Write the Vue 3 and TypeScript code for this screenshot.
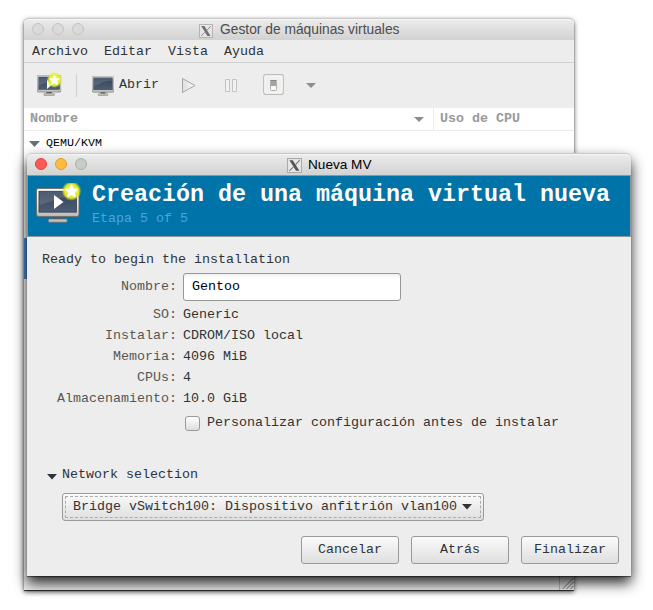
<script setup lang="ts">
interface Detail {
  label: string
  value: string
}

const menus: string[] = ['Archivo', 'Editar', 'Vista', 'Ayuda']

const details: Detail[] = [
  { label: 'SO:', value: 'Generic' },
  { label: 'Instalar:', value: 'CDROM/ISO local' },
  { label: 'Memoria:', value: '4096 MiB' },
  { label: 'CPUs:', value: '4' },
  { label: 'Almacenamiento:', value: '10.0 GiB' },
]

const actions: string[] = ['Cancelar', 'Atrás', 'Finalizar']
</script>

<template>
  <div class="desktop">
    <svg class="defs" width="0" height="0" aria-hidden="true">
      <defs>
        <linearGradient id="screenFill" x1="0" y1="0" x2="0" y2="1">
          <stop offset="0" stop-color="#35435a" />
          <stop offset="1" stop-color="#4c5d74" />
        </linearGradient>
        <linearGradient id="frameFill" x1="0" y1="0" x2="0" y2="1">
          <stop offset="0" stop-color="#ffffff" />
          <stop offset="0.75" stop-color="#dcdcda" />
          <stop offset="1" stop-color="#b4b4b2" />
        </linearGradient>
        <radialGradient id="starGlow">
          <stop offset="0" stop-color="#fff95a" />
          <stop offset="0.7" stop-color="#eaf01c" stop-opacity="0.95" />
          <stop offset="1" stop-color="#d8e830" stop-opacity="0" />
        </radialGradient>
        <linearGradient id="playFill" x1="0" y1="0" x2="1" y2="0">
          <stop offset="0" stop-color="#dededc" />
          <stop offset="1" stop-color="#fafafa" />
        </linearGradient>
        <symbol id="monitor" viewBox="0 0 44 35" preserveAspectRatio="none">
          <path d="M17 28h10v3h-10z" fill="#555753" />
          <rect x="12.5" y="31" width="19" height="3.2" rx="0.8" fill="#c4c4c2" stroke="#6c6e6b" stroke-width="0.8" />
          <rect x="0.5" y="0.5" width="43" height="28" rx="1.8" fill="url(#frameFill)" stroke="#70726f" />
          <rect x="3" y="3.2" width="38" height="21" fill="url(#screenFill)" stroke="#2c394b" stroke-width="0.7" />
          <path d="M3.5 3.7h37v4C27 8 17 13 3.5 17z" fill="#fff" opacity="0.13" />
        </symbol>
        <symbol id="star" viewBox="0 0 20 20">
          <circle cx="10" cy="10" r="10" fill="url(#starGlow)" />
          <path d="M10 3.600l1.900 4.100 4.500.6-3.300 3.100.8 4.500-3.900-2.200-3.900 2.200.8-4.500-3.300-3.100 4.500-.6z" fill="#fff" stroke="#fff" stroke-width="0.8" stroke-linejoin="round" />
        </symbol>
        <symbol id="xlogo" viewBox="0 0 14 14">
          <rect x="0.5" y="0.5" width="13" height="13" fill="#e9e9e9" stroke="#aaa" />
          <path d="M2.2 2h3.2l6.2 10H8.4z" fill="#555" />
          <path d="M11.8 2L7.9 6.4M6 8.2L2.2 12" stroke="#777" stroke-width="1" fill="none" />
        </symbol>
      </defs>
    </svg>

    <section class="window manager">
      <header class="titlebar inactive">
        <div class="lights"><i></i><i></i><i></i></div>
        <svg class="xicon" width="14" height="14"><use href="#xlogo" /></svg>
        <span class="caption">Gestor de máquinas virtuales</span>
      </header>
      <nav class="menubar">
        <span v-for="menu in menus" :key="menu">{{ menu }}</span>
      </nav>
      <div class="toolbar">
        <svg class="tool-new" width="27" height="25" viewBox="0 0 27 25">
          <use href="#monitor" x="0" y="3" width="24.3" height="21" />
          <path d="M10 8v9l5-4.5z" fill="#fff" />
          <use href="#star" x="9.500" y="0" width="16" height="16" />
        </svg>
        <span class="separator"></span>
        <svg class="tool-open" width="22" height="20"><use href="#monitor" width="22" height="20" /></svg>
        <span class="open-label">Abrir</span>
        <svg class="tool-play" width="15" height="17" viewBox="0 0 15 17">
          <path d="M1.5 1.5v14l12.5-7z" fill="url(#playFill)" stroke="#a5a6a4" stroke-linejoin="round" />
        </svg>
        <svg class="tool-pause" width="14" height="13" viewBox="0 0 14 13">
          <path d="M1.5.5h4v12h-4zM8.5.5h4v12h-4z" fill="#f1f1f0" stroke="#c3c4c2" />
        </svg>
        <svg class="tool-power" width="21" height="21" viewBox="0 0 21 21">
          <rect x="0.7" y="0.7" width="19.6" height="19.6" rx="2" fill="#efefee" stroke="#bcbdbb" stroke-width="1.2" />
          <rect x="2" y="2" width="17" height="17" rx="1" fill="none" stroke="#fafafa" />
          <rect x="7.5" y="6.5" width="6" height="10" rx="1" fill="#fafafa" stroke="#b0b1af" />
          <path d="M8 7h5v5H8z" fill="#a4a5a3" />
          <path d="M7.5 7V6.5h6" stroke="#868785" fill="none" />
        </svg>
        <svg class="tool-more" width="10" height="5" viewBox="0 0 10 5"><path d="M0 0h10L5 5z" fill="#8b8e8f" /></svg>
      </div>
      <div class="columns">
        <div class="column-name">
          <span>Nombre</span>
          <svg width="10" height="5" viewBox="0 0 10 5"><path d="M0 0h10L5 5z" fill="#8b8e8f" /></svg>
        </div>
        <div class="column-cpu">Uso de CPU</div>
      </div>
      <div class="list">
        <div class="connection">
          <svg width="11" height="6" viewBox="0 0 11 6"><path d="M0 0h11L5.5 6z" fill="#697073" /></svg>
          <span>QEMU/KVM</span>
        </div>
        <div class="selected-row"></div>
      </div>
      <footer class="statusbar">
        <svg width="15" height="14" viewBox="0 0 15 14">
          <path d="M.5 0v14" stroke="#bbb" />
          <path d="M3.500 13l11-11M7.500 13l7-7M11.500 13l3-3" stroke="#777" />
        </svg>
      </footer>
    </section>

    <section class="window dialog">
      <header class="titlebar active">
        <div class="lights"><i class="close"></i><i class="minimize"></i><i class="zoom"></i></div>
        <svg class="xicon" width="15" height="15"><use href="#xlogo" /></svg>
        <span class="caption">Nueva MV</span>
      </header>
      <div class="banner">
        <svg class="banner-icon" width="50" height="44" viewBox="0 0 50 44">
          <use href="#monitor" x="1" y="5" width="43.5" height="35" />
          <path d="M19 12v14l9.500-7z" fill="#fff" />
          <use href="#star" x="26.500" y="-2" width="20" height="20" />
        </svg>
        <div>
          <h1>Creación de una máquina virtual nueva</h1>
          <p>Etapa 5 of 5</p>
        </div>
      </div>
      <main class="body">
        <p class="intro">Ready to begin the installation</p>
        <div class="name-row">
          <label for="vm-name">Nombre:</label>
          <input id="vm-name" type="text" value="Gentoo" />
        </div>
        <dl class="details">
          <template v-for="detail in details" :key="detail.label">
            <dt>{{ detail.label }}</dt>
            <dd>{{ detail.value }}</dd>
          </template>
        </dl>
        <div class="check-row">
          <span class="checkbox"></span>
          <span>Personalizar configuración antes de instalar</span>
        </div>
        <div class="expander">
          <svg width="10" height="6" viewBox="0 0 10 6"><path d="M0 0h10L5 5.500z" fill="#2e3436" /></svg>
          <span>Network selection</span>
        </div>
        <div class="combo">
          <div class="combo-focus">
            <span>Bridge vSwitch100: Dispositivo anfitrión vlan100</span>
            <svg width="10" height="6" viewBox="0 0 10 6"><path d="M0 0h10L5 5.500z" fill="#2e3436" /></svg>
          </div>
        </div>
        <div class="actions">
          <button v-for="action in actions" :key="action" type="button">{{ action }}</button>
        </div>
      </main>
    </section>
  </div>
</template>

<style>
body {
  margin: 0;
  background: #fff;
}
</style>

<style scoped>
* {
  box-sizing: border-box;
}

.desktop {
  position: relative;
  width: 653px;
  height: 610px;
  overflow: hidden;
  background: #fff;
  color: #2e3436;
  font: 13.333px/16px 'Liberation Mono', monospace;
}

.defs {
  position: absolute;
}

svg {
  display: block;
  flex: none;
}

h1,
p,
dl,
dd {
  margin: 0;
}

.window {
  position: absolute;
  display: flex;
  flex-direction: column;
  background: #ededed;
  border-radius: 5px 5px 0 0;
}

.manager {
  left: 24px;
  top: 18px;
  width: 550px;
  height: 572px;
  box-shadow: 0 1px 1px rgba(0, 0, 0, 0.75), 0 2px 5px rgba(0, 0, 0, 0.65);
}

.dialog {
  left: 27px;
  top: 153px;
  width: 604px;
  height: 423px;
  box-shadow: 0 1px 1px rgba(0, 0, 0, 0.5), 0 7px 14px rgba(0, 0, 0, 0.85);
}

.titlebar {
  display: flex;
  align-items: center;
  flex: none;
  height: 22px;
  padding-left: 8px;
  border-radius: 5px 5px 0 0;
  border-top: 1px solid #c9c9c9;
  background: linear-gradient(#ececec, #d2d2d2);
  box-shadow: inset 0 1px #f6f6f6;
  font-family: 'Liberation Sans', sans-serif;
}

.lights {
  display: flex;
  gap: 8px;
}

.lights i {
  width: 12px;
  height: 12px;
  border: 1px solid #c4c4c4;
  border-radius: 50%;
  background: #dadada;
}

.lights .close {
  border-color: #e0443e;
  background: #fc5b57;
}

.lights .minimize {
  border-color: #dd9f2c;
  background: #fdbc40;
}

.lights .zoom {
  border-color: #9db8a0;
  background: #c9cbc9;
}

.inactive .lights {
  margin-top: -1px;
}

.active .lights {
  margin-top: -2px;
}

.inactive .xicon {
  margin: 2px 7px 0 115px;
  opacity: 0.8;
}

.active .xicon {
  margin: 2px 6px 0 200px;
}

.caption {
  color: #000;
  font-size: 13.6px;
}

.inactive .caption {
  color: #4c4c4c;
  font-size: 13.8px;
}

.menubar {
  display: flex;
  gap: 16px;
  flex: none;
  height: 23px;
  padding: 4px 8px 0;
  border-bottom: 1px solid #d0d0d0;
}

.toolbar {
  display: flex;
  align-items: center;
  flex: none;
  height: 45px;
  padding-left: 13px;
}

.tool-new {
  margin-top: -3px;
}

.separator {
  width: 1px;
  height: 23px;
  margin: 0 15px 0 12px;
  background: #d0d0d0;
}

.open-label {
  margin: -1px 22px 0 5px;
}

.tool-pause {
  margin: 0 25px 0 28px;
}

.tool-power {
  margin: -2px 22px 0 0;
}

.columns {
  display: flex;
  flex: none;
  height: 23px;
  border-bottom: 1px solid #ececec;
  background: #fff;
  color: #979a9b;
  font-weight: bold;
}

.column-name {
  display: flex;
  justify-content: space-between;
  width: 410px;
  padding: 3px 9px 0 6px;
  border-right: 1px solid #ececec;
}

.column-name svg {
  margin-top: 6px;
}

.column-cpu {
  padding: 3px 0 0 6px;
}

.list {
  flex: 1;
  background: #fff;
}

.connection {
  display: flex;
  align-items: center;
  gap: 6px;
  height: 107px;
  padding: 4px 0 87px 5px;
  color: #000;
  font-size: 11.667px;
}

.connection svg {
  margin-top: 2px;
}

.selected-row {
  height: 41px;
  background: #4a90d9;
}

.statusbar {
  display: flex;
  justify-content: flex-end;
  flex: none;
  height: 14px;
}

.banner {
  display: flex;
  flex: none;
  height: 62px;
  padding: 5px 0 0 7px;
  border: 1px solid #8e979b;
  background: #0073a9;
}

.banner-icon {
  margin: 2px 7px 0 0;
}

.banner h1 {
  color: #fff;
  font-size: 23.333px;
  line-height: 28px;
  white-space: nowrap;
}

.banner p {
  margin-top: 2px;
  color: #47a8dc;
}

.body {
  display: flex;
  flex-direction: column;
  flex: 1;
  padding: 15px 12px 12px 15px;
}

.name-row {
  display: flex;
  align-items: center;
  height: 28px;
  margin-top: 5px;
}

.name-row label {
  width: 135px;
  margin: 0 6px 0 0;
  color: #555753;
  text-align: right;
}

.name-row input {
  width: 218px;
  height: 28px;
  padding: 0 8px 1px;
  border: 1px solid #979997;
  border-radius: 3px;
  outline: none;
  background: linear-gradient(#f1f1f1, #fff 5px);
  color: #000;
  font: inherit;
}

.details {
  display: grid;
  grid-template-columns: 135px 1fr;
  column-gap: 6px;
  grid-auto-rows: 21px;
  margin-top: 6px;
}

.details dt {
  color: #555753;
  text-align: right;
}

.check-row {
  display: flex;
  gap: 7px;
  margin: 3px 0 0 143px;
}

.checkbox {
  width: 15px;
  height: 15px;
  margin-top: 1px;
  border: 1px solid #999b99;
  border-radius: 3px;
  background: linear-gradient(#fff, #dedede);
}

.expander {
  display: flex;
  align-items: center;
  gap: 5px;
  margin: 36px 0 0 5px;
}

.expander svg {
  margin-top: 4px;
}

.combo {
  width: 422px;
  height: 28px;
  margin: 10px 0 0 20px;
  padding: 2px;
  border: 1px solid #999b99;
  border-radius: 3px;
  background: linear-gradient(#fafafa, #dfdfdf);
}

.combo-focus {
  display: flex;
  align-items: center;
  gap: 5px;
  height: 22px;
  padding: 0 0 1px 7px;
  border: 1px dashed #aaacaa;
}

.actions {
  display: flex;
  justify-content: flex-end;
  gap: 12px;
  margin-top: 15px;
}

.actions button {
  width: 98px;
  height: 28px;
  padding: 0 0 1px;
  border: 1px solid #999b99;
  border-radius: 3px;
  background: linear-gradient(#fafafa, #dfdfdf);
  color: #2e3436;
  font: inherit;
}
</style>
